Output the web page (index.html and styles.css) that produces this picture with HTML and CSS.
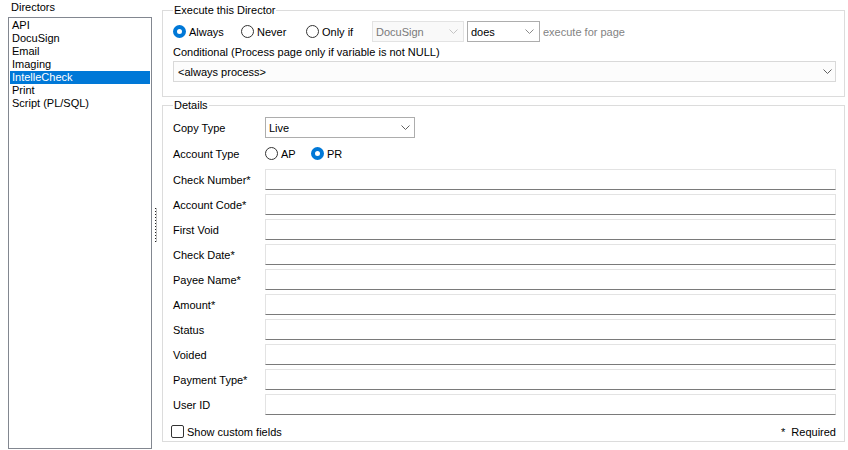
FILE: index.html
```html
<!DOCTYPE html>
<html>
<head>
<meta charset="utf-8">
<link rel="stylesheet" href="styles.css">
</head>
<body>
<div class="app">
  <div class="left">
    <div class="left-label">Directors</div>
    <ul class="listbox">
      <li>API</li>
      <li>DocuSign</li>
      <li>Email</li>
      <li>Imaging</li>
      <li class="sel">IntelleCheck</li>
      <li>Print</li>
      <li>Script (PL/SQL)</li>
    </ul>
  </div>
  <div class="splitter"><div class="grip"></div></div>
  <div class="right">
    <fieldset class="group g1">
      <legend>Execute this Director</legend>
      <div class="exec-row">
        <label class="opt w-always"><span class="radio on"></span>Always</label>
        <label class="opt w-never"><span class="radio"></span>Never</label>
        <label class="opt w-onlyif"><span class="radio"></span>Only if</label>
        <div class="combo disabled w-docu"><span>DocuSign</span><svg class="chev" width="9" height="5" viewBox="0 0 9 5"><polyline points="0.5,0.5 4.5,4.5 8.5,0.5" fill="none" stroke="#c4c4c4" stroke-width="1"/></svg></div>
        <div class="combo w-does"><span>does</span><svg class="chev" width="9" height="5" viewBox="0 0 9 5"><polyline points="0.5,0.5 4.5,4.5 8.5,0.5" fill="none" stroke="#8a8a8a" stroke-width="1"/></svg></div>
        <span class="muted">execute for page</span>
      </div>
      <div class="cond-label">Conditional (Process page only if variable is not NULL)</div>
      <div class="combo light full"><span>&lt;always process&gt;</span><svg class="chev" width="9" height="5" viewBox="0 0 9 5"><polyline points="0.5,0.5 4.5,4.5 8.5,0.5" fill="none" stroke="#606060" stroke-width="1"/></svg></div>
    </fieldset>
    <fieldset class="group g2">
      <legend>Details</legend>
      <div class="row r-copy">
        <span class="lbl">Copy Type</span>
        <div class="combo w-copy"><span>Live</span><svg class="chev" width="9" height="5" viewBox="0 0 9 5"><polyline points="0.5,0.5 4.5,4.5 8.5,0.5" fill="none" stroke="#606060" stroke-width="1"/></svg></div>
      </div>
      <div class="row r-acct">
        <span class="lbl">Account Type</span>
        <label class="opt w-ap"><span class="radio"></span>AP</label>
        <label class="opt"><span class="radio on"></span>PR</label>
      </div>
      <div class="fields">
        <div class="row"><span class="lbl">Check Number*</span><div class="field"></div></div>
        <div class="row"><span class="lbl">Account Code*</span><div class="field"></div></div>
        <div class="row"><span class="lbl">First Void</span><div class="field"></div></div>
        <div class="row"><span class="lbl">Check Date*</span><div class="field"></div></div>
        <div class="row"><span class="lbl">Payee Name*</span><div class="field"></div></div>
        <div class="row"><span class="lbl">Amount*</span><div class="field"></div></div>
        <div class="row"><span class="lbl">Status</span><div class="field"></div></div>
        <div class="row"><span class="lbl">Voided</span><div class="field"></div></div>
        <div class="row"><span class="lbl">Payment Type*</span><div class="field"></div></div>
        <div class="row"><span class="lbl">User ID</span><div class="field"></div></div>
      </div>
      <div class="foot">
        <label class="chk-opt"><span class="chk"></span>Show custom fields</label>
        <span class="req">*&nbsp; Required</span>
      </div>
    </fieldset>
  </div>
</div>
</body>
</html>
```

FILE: styles.css
```css
* { box-sizing: border-box; }
html, body { margin: 0; padding: 0; background: #ffffff; }
body {
  font-family: "Liberation Sans", Arial, sans-serif;
  font-size: 11px;
  color: #000;
  line-height: 14px;
}
.app { display: flex; height: 450px; width: 848px; }

.left { width: 144px; margin-left: 8px; display: flex; flex-direction: column; }
.left-label { height: 17px; padding-left: 3px; line-height: 14px; }
.listbox {
  list-style: none; margin: 0 0 1px 0; padding: 1px;
  border: 1px solid #828790; flex: 1;
}
.listbox li { height: 13px; line-height: 13px; padding-left: 2px; white-space: nowrap; }
.listbox li.sel { background: #0078d7; color: #fff; }

.splitter { width: 10px; display: flex; align-items: center; justify-content: flex-start; }
.grip {
  width: 1px; height: 34px; margin-left: 3px;
  background: repeating-linear-gradient(to bottom, #222 0 1px, transparent 1px 3px);
  box-shadow: 1px 0 0 rgba(0,0,0,0.25);
}

.right { width: 683px; padding-top: 3px; display: flex; flex-direction: column; }

.group {
  margin: 0; border: 1px solid #dcdcdc; min-width: 0;
  padding: 0 8px 0 10px;
}
.group legend { padding: 0 1px; line-height: 14px; height: 14px; }
.g1 { padding-top: 4px; padding-bottom: 14px; }
.g2 { margin-top: 1px; padding-top: 5px; padding-bottom: 2px; }

.exec-row { display: flex; align-items: center; height: 21px; }
.opt { display: flex; align-items: center; white-space: nowrap; }
.w-always { width: 68px; }
.w-never { width: 65px; }
.w-onlyif { width: 66px; }
.w-ap { width: 46px; }
.radio {
  width: 13px; height: 13px; border-radius: 50%;
  border: 1px solid #333; background: #fff; margin-right: 3px; flex: none;
}
.radio.on { border: 4px solid #0078d7; background: #fff; }

.combo {
  height: 21px; border: 1px solid #adadad; background: #fff;
  display: flex; align-items: center; justify-content: space-between;
  padding: 0 5px 0 3px; flex: none;
}
.combo.disabled { background: #f9f9f9; border-color: #e3e3e3; color: #7a7a7a; }
.combo.light { background: #fcfcfc; border-color: #d9d9d9; }
.w-docu { width: 92px; margin-right: 3px; }
.w-does { width: 73px; margin-right: 3px; }
.w-copy { width: 150px; padding-right: 4px; }
.full { width: 663px; padding-left: 4px; padding-right: 3px; }
.muted { color: #838383; }

.cond-label { margin-top: 3px; height: 14px; margin-bottom: 2px; }

.row { display: flex; align-items: center; height: 21px; }
.lbl { width: 92px; flex: none; white-space: nowrap; }
.r-copy { margin-bottom: 5px; }
.r-acct { margin-bottom: 5px; }
.fields { display: flex; flex-direction: column; gap: 4px; }
.field {
  height: 21px; width: 571px; background: #fff;
  border: 1px solid #e3e3e3; border-bottom-color: #7a7a7a;
}
.foot {
  display: flex; align-items: center; justify-content: space-between;
  height: 15px; margin-top: 9px;
}
.chk-opt { display: flex; align-items: center; margin-left: -2px; }
.chk {
  width: 13px; height: 13px; border: 1px solid #333; border-radius: 2px;
  background: #fff; margin-right: 3px;
}
.req { margin-right: 0; }
```
